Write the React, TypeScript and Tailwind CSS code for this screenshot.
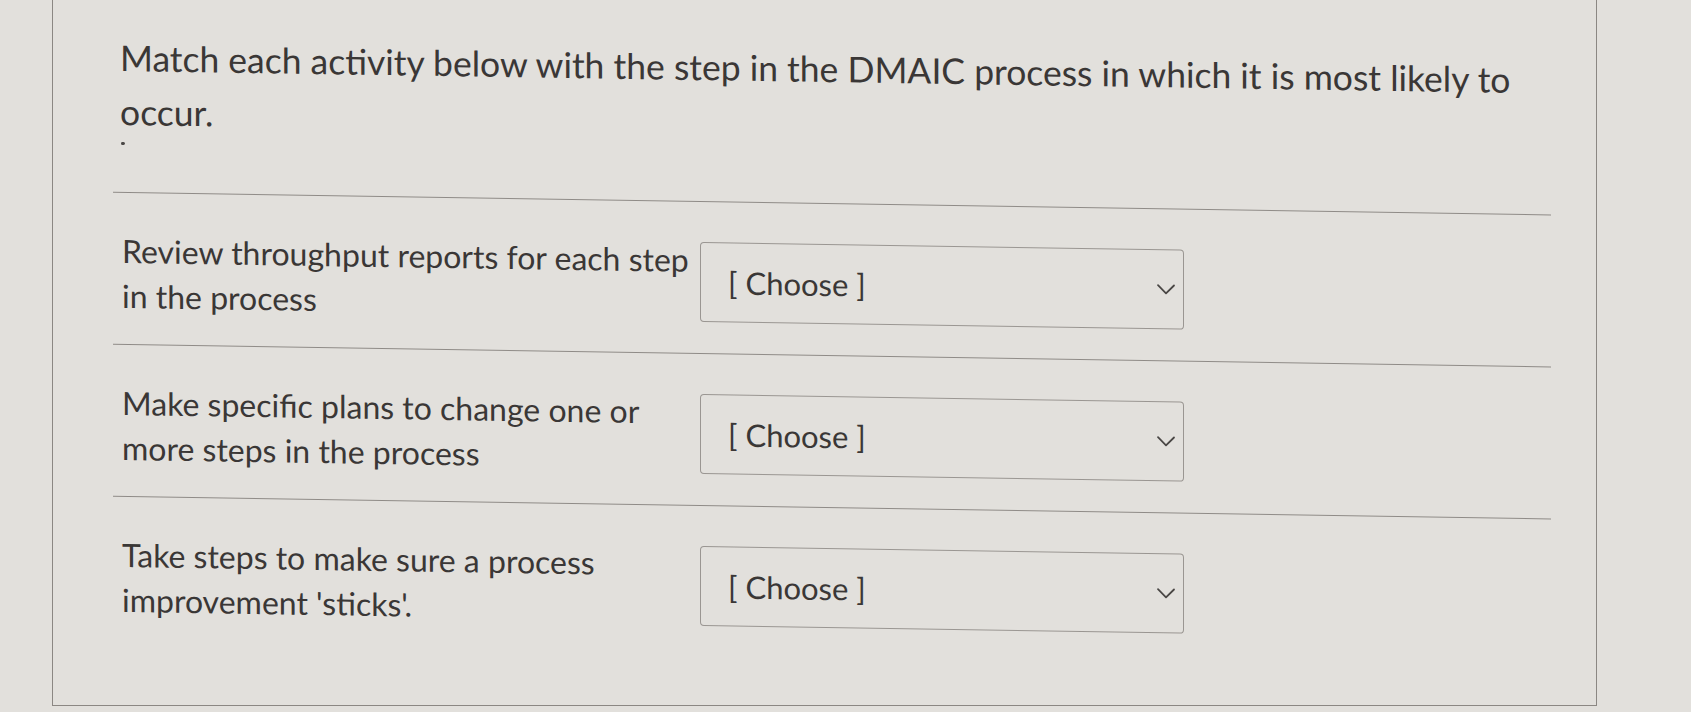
const ITEMS = [
  ["Review throughput reports for each step", "in the process"],
  ["Make specific plans to change one or", "more steps in the process"],
  ["Take steps to make sure a process", "improvement 'sticks'."],
];

function Chevron() {
  return (
    <svg width="20" height="12" viewBox="0 0 20 12" fill="none">
      <polyline points="2,2 10,10 18,2" stroke="#4a4745" strokeWidth="1.8" strokeLinecap="round" strokeLinejoin="round" />
    </svg>
  );
}

function Row({ lines }: { lines: string[] }) {
  return (
    <div className="grid grid-cols-[587px_484px] items-center border-t border-[#8f8b87] pt-[35px] pb-[26px]">
      <p className="pl-[9px] text-[32px] leading-[45px]">
        {lines[0]}
        <br />
        {lines[1]}
      </p>
      <div className="flex h-[80px] items-center justify-between rounded-[4px] border border-[#9a9692] pl-[27px] pr-[7px]">
        <span className="text-[31px] leading-none">[ Choose ]</span>
        <Chevron />
      </div>
    </div>
  );
}

export default function App() {
  return (
    <div className="h-[712px] w-[1691px] overflow-hidden bg-[#e2e0dc] font-['Lato',sans-serif] text-[#3a3736]">
      <div className="ml-[52px] h-[706px] w-[1545px] border-x border-b border-[#8b8783]">
        <div className="skew-y-[0.9deg] pl-[60px] pr-[45px] pt-[42px]">
          <h1 className="pl-[7px] text-[35.5px] font-normal leading-[54px]">
            Match each activity below with the step in the DMAIC process in which it is most likely to occur.
          </h1>
          <div className="ml-[8px] mt-[3px] h-[3px] w-[4px] rounded-full bg-[#4a4745]" />
          <div className="mt-[47px]">
            {ITEMS.map((lines, i) => (
              <Row key={i} lines={lines} />
            ))}
          </div>
        </div>
      </div>
    </div>
  );
}
